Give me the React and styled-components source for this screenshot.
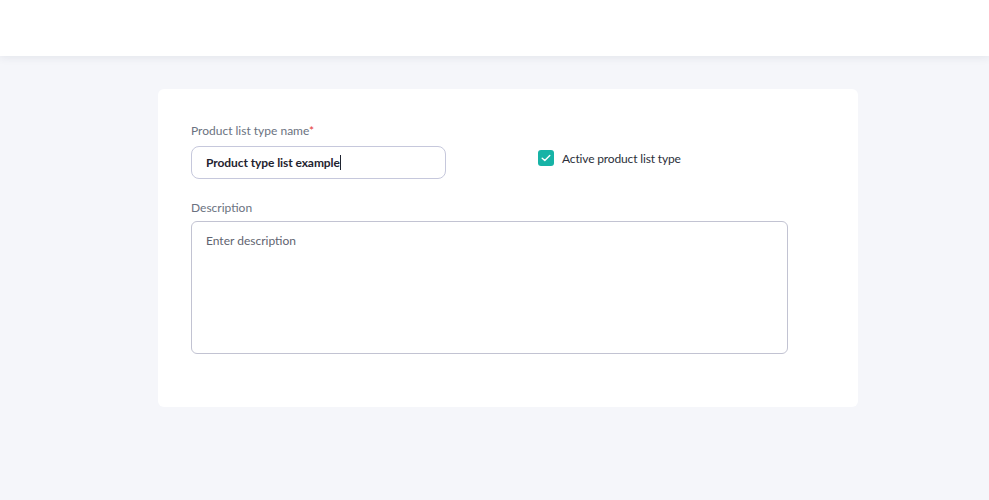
import React from "react";
import styled, { createGlobalStyle } from "styled-components";

const Global = createGlobalStyle`
  html, body { margin: 0; padding: 0; background: #f5f6fa; }
  body { font-family: Lato, "Noto Sans", sans-serif; }
  * { box-sizing: border-box; }
`;

const Page = styled.div`
  min-height: 500px;
  background: #f5f6fa;
`;

const Header = styled.header`
  height: 56px;
  background: #ffffff;
  box-shadow: 0 2px 8px rgba(40, 45, 80, 0.08);
  position: relative;
  z-index: 1;
`;

const Main = styled.main`
  padding: 33px 0 0 158px;
`;

const Card = styled.section`
  width: 700px;
  height: 318px;
  background: #ffffff;
  border-radius: 6px;
  padding: 34px 33px;
`;

const Row = styled.div`
  display: flex;
  align-items: flex-start;
`;

const Field = styled.div`
  display: flex;
  flex-direction: column;
  width: ${(p) => p.$width}px;
  margin-top: ${(p) => p.$mt || 0}px;
`;

const Label = styled.label`
  font-size: 12px;
  line-height: 15px;
  color: #6b7280;
  margin-bottom: ${(p) => p.$gap ?? 8}px;
`;

const Req = styled.span`
  color: #e53935;
`;

const Input = styled.div`
  height: 33px;
  border: 1px solid #c6c8dc;
  border-radius: 8px;
  padding: 0 14px;
  display: flex;
  align-items: center;
  font-size: 12px;
  font-weight: 700;
  color: #1f2430;
  letter-spacing: -0.08px;
`;

const Caret = styled.span`
  display: inline-block;
  width: 1px;
  height: 15px;
  background: #1f2430;
`;

const CheckWrap = styled.div`
  display: flex;
  align-items: center;
  gap: 8px;
  margin-left: 92px;
  margin-top: 27px;
  font-size: 12px;
  letter-spacing: -0.15px;
  color: #2b2f3a;
`;

const Box = styled.span`
  width: 16px;
  height: 16px;
  border-radius: 3px;
  background: #17b3a6;
  display: flex;
  align-items: center;
  justify-content: center;
`;

const TextArea = styled.div`
  height: 133px;
  border: 1px solid #c2c3d2;
  border-radius: 6px;
  padding: 11px 14px;
  font-size: 12px;
  line-height: 15px;
  color: #5f6470;
`;

export default function App() {
  return (
    <Page>
      <Global />
      <Header />
      <Main>
        <Card>
          <Row>
            <Field $width={255}>
              <Label>
                Product list type name<Req>*</Req>
              </Label>
              <Input>
                Product type list example
                <Caret />
              </Input>
            </Field>
            <CheckWrap>
              <Box>
                <svg width="10" height="8" viewBox="0 0 10 8" fill="none">
                  <path d="M1.2 4.2 L3.8 6.6 L8.8 1.4" stroke="#fff" strokeWidth="1.4" strokeLinecap="round" strokeLinejoin="round" />
                </svg>
              </Box>
              Active product list type
            </CheckWrap>
          </Row>
          <Field $width={597} $mt={21}>
            <Label $gap={6}>Description</Label>
            <TextArea>Enter description</TextArea>
          </Field>
        </Card>
      </Main>
    </Page>
  );
}
